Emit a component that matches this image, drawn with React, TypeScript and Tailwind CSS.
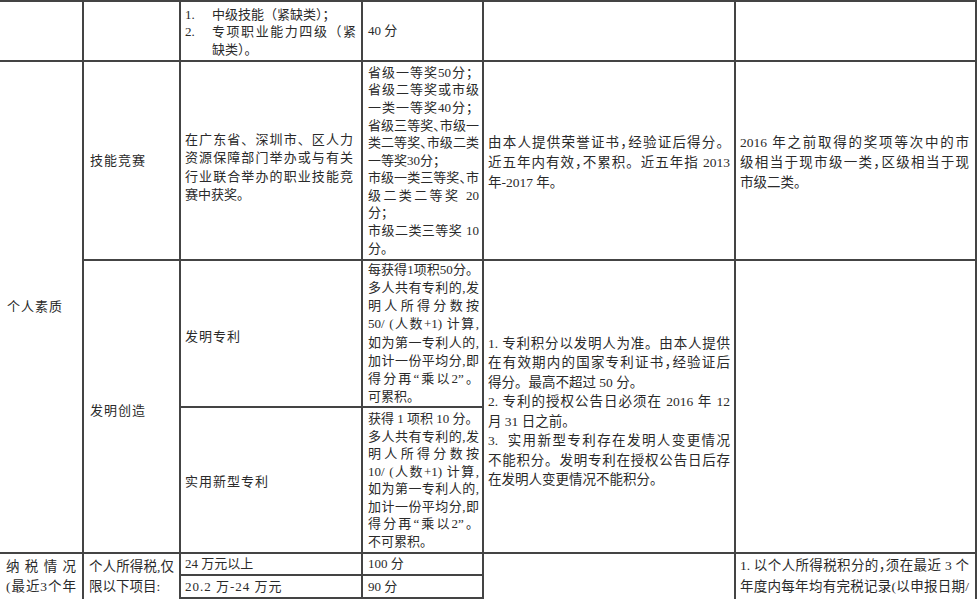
import React from "react";

const B = "border-r-2 border-b-2 border-[#444]";
const J = "[text-align-last:justify] text-justify";

function L({ children, j = true, className = "" }: { children: React.ReactNode; j?: boolean; className?: string }) {
  return <div className={(j ? J + " " : "") + className}>{children}</div>;
}

function P({ c }: { c: string }) {
  return <span className="mr-[-0.5em]">{c}</span>;
}

export default function App() {
  return (
    <div className="w-[980px] h-[599px] overflow-hidden bg-white text-[#2a2a2a] font-['Liberation_Serif','Noto_Sans_CJK_SC',serif] text-[13px]">
      <div className="grid w-[977px] grid-cols-[84px_97px_182px_121px_252px_241px] grid-rows-[60px_199px_147px_146px_22px_23px] border-t-2 border-[#444]">
        {/* Row 1 */}
        <div className={`${B} col-start-1 row-start-1`} />
        <div className={`${B} col-start-2 row-start-1`} />
        <div className={`${B} col-start-3 row-start-1 flex flex-col justify-center pl-[4px] pr-[5px] pt-[2px] leading-[17.5px]`}>
          <div className="flex">
            <span className="w-[27px] shrink-0">1.</span>
            <span>中级技能（紧缺类）；</span>
          </div>
          <div className="flex">
            <span className="w-[27px] shrink-0">2.</span>
            <div className="flex-1">
              <L>专项职业能力四级（紧</L>
              <L j={false}>缺类）。</L>
            </div>
          </div>
        </div>
        <div className={`${B} col-start-4 row-start-1 flex items-center pl-[5px]`}>40 分</div>
        <div className={`${B} col-start-5 row-start-1`} />
        <div className={`${B} col-start-6 row-start-1`} />

        {/* 个人素质 */}
        <div className={`${B} col-start-1 row-start-2 row-span-3 flex items-center pl-[7px] tracking-[1px]`}>个人素质</div>

        {/* 技能竞赛 */}
        <div className={`${B} col-start-2 row-start-2 flex items-center pl-[6px] tracking-[1px]`}>技能竞赛</div>
        <div className={`${B} col-start-3 row-start-2 flex flex-col justify-center pl-[4px] pr-[8px] pt-[14px] leading-[18.3px]`}>
          <L>在广东省、深圳市、区人力</L>
          <L>资源保障部门举办或与有关</L>
          <L>行业联合举办的职业技能竞</L>
          <L j={false}>赛中获奖。</L>
        </div>
        <div className={`${B} col-start-4 row-start-2 flex flex-col justify-center pl-[5px] pr-[3px] leading-[17.6px]`}>
          <L>省级一等奖50分；</L>
          <L>省级二等奖或市级</L>
          <L>一类一等奖40分；</L>
          <L>省级三等奖<P c="、" />市级一</L>
          <L>类二等奖<P c="、" />市级二类</L>
          <L j={false}>一等奖30分；</L>
          <L>市级一类三等奖<P c="、" />市</L>
          <L>级二类二等奖 20</L>
          <L j={false}>分；</L>
          <L>市级二类三等奖 10</L>
          <L j={false}>分。</L>
        </div>
        <div className={`${B} col-start-5 row-start-2 flex flex-col justify-center pl-[4px] pr-[4px] pt-[4px] text-[13.5px] leading-[20px]`}>
          <L>由本人提供荣誉证书<P c="，" />经验证后得分。</L>
          <L>近五年内有效<P c="，" />不累积。近五年指 2013</L>
          <L j={false}>年-2017 年。</L>
        </div>
        <div className={`${B} col-start-6 row-start-2 flex flex-col justify-center pl-[4px] pr-[6px] pt-[4px] text-[13.5px] leading-[20px]`}>
          <L>2016 年之前取得的奖项等次中的市</L>
          <L>级相当于现市级一类<P c="，" />区级相当于现</L>
          <L j={false}>市级二类。</L>
        </div>

        {/* 发明创造 */}
        <div className={`${B} col-start-2 row-start-3 row-span-2 flex items-center pl-[6px] pt-[8px] tracking-[1px]`}>发明创造</div>
        <div className={`${B} col-start-3 row-start-3 flex items-center pl-[4px] pt-[6px] tracking-[1px]`}>发明专利</div>
        <div className={`${B} col-start-4 row-start-3 flex flex-col justify-center pl-[5px] pr-[3px] leading-[18.1px]`}>
          <L>每获得1项积50分。</L>
          <L>多人共有专利的,发</L>
          <L>明人所得分数按</L>
          <L>50/ (人数+1) 计算,</L>
          <L>如为第一专利人的,</L>
          <L>加计一份平均分,即</L>
          <L>得分再“乘以2”。</L>
          <L j={false}>可累积。</L>
        </div>
        <div className={`${B} col-start-5 row-start-3 row-span-2 flex flex-col justify-center pl-[4px] pr-[4px] pt-[10px] text-[13.5px] leading-[19.5px]`}>
          <L>1. 专利积分以发明人为准。由本人提供</L>
          <L>在有效期内的国家专利证书<P c="，" />经验证后</L>
          <L j={false}>得分。最高不超过 50 分。</L>
          <L>2. 专利的授权公告日必须在 2016 年 12</L>
          <L j={false}>月 31 日之前。</L>
          <L>3.&nbsp; 实用新型专利存在发明人变更情况</L>
          <L>不能积分。发明专利在授权公告日后存</L>
          <L j={false}>在发明人变更情况不能积分。</L>
        </div>
        <div className={`${B} col-start-6 row-start-3 row-span-2`} />
        <div className={`${B} col-start-3 row-start-4 flex items-center pl-[4px] pt-[4px] tracking-[1px]`}>实用新型专利</div>
        <div className={`${B} col-start-4 row-start-4 flex flex-col justify-center pl-[5px] pr-[3px] leading-[17.5px]`}>
          <L j={false}>获得 1 项积 10 分。</L>
          <L>多人共有专利的,发</L>
          <L>明人所得分数按</L>
          <L>10/ (人数+1) 计算,</L>
          <L>如为第一专利人的,</L>
          <L>加计一份平均分,即</L>
          <L>得分再“乘以2”。</L>
          <L j={false}>不可累积。</L>
        </div>

        {/* 纳税情况 */}
        <div className="border-r-2 border-[#444] col-start-1 row-start-5 row-span-2 pl-[6px] pr-[6px] pt-[3px] text-[13.5px] leading-[20px]">
          <L>纳税情况</L>
          <L>(最近3个年</L>
        </div>
        <div className="border-r-2 border-[#444] col-start-2 row-start-5 row-span-2 pl-[5px] pr-[5px] pt-[3px] text-[13.5px] leading-[20px]">
          <L>个人所得税,仅</L>
          <L j={false}>限以下项目:</L>
        </div>
        <div className={`${B} col-start-3 row-start-5 flex items-center pl-[4px]`}>24 万元以上</div>
        <div className={`${B} col-start-4 row-start-5 flex items-center pl-[5px]`}>100 分</div>
        <div className={`${B} col-start-3 row-start-6 flex items-center pl-[4px] tracking-[1px]`}>20.2 万-24 万元</div>
        <div className={`${B} col-start-4 row-start-6 flex items-center pl-[5px]`}>90 分</div>
        <div className="border-r-2 border-[#444] col-start-5 row-start-5 row-span-2" />
        <div className="border-r-2 border-[#444] col-start-6 row-start-5 row-span-2 pl-[4px] pr-[6px] pt-[1px] text-[13.5px] leading-[21px]">
          <L>1. 以个人所得税积分的<P c="，" />须在最近 3 个</L>
          <L>年度内每年均有完税记录(以申报日期/</L>
        </div>
      </div>
    </div>
  );
}
